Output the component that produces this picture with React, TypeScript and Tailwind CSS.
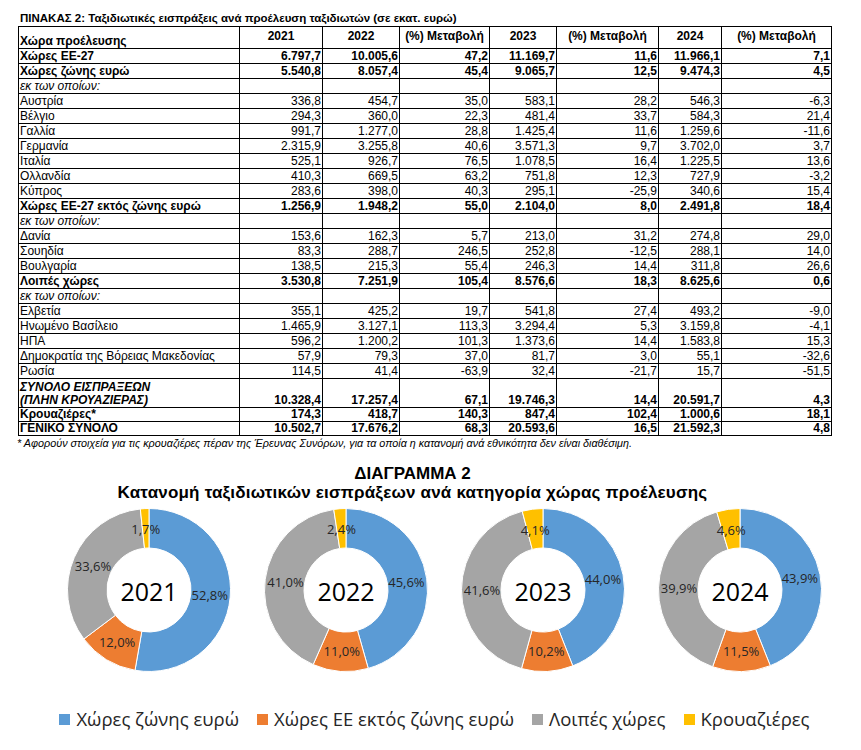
import React from 'react';

type Row = {
  label: string;
  v?: string[];
  kind?: 'bold' | 'sub' | 'total';
  h?: string;
};

const ROWS: Row[] = [
  { label: 'Χώρες ΕΕ-27', v: ['6.797,7', '10.005,6', '47,2', '11.169,7', '11,6', '11.966,1', '7,1'], kind: 'bold' },
  { label: 'Χώρες ζώνης ευρώ', v: ['5.540,8', '8.057,4', '45,4', '9.065,7', '12,5', '9.474,3', '4,5'], kind: 'bold' },
  { label: 'εκ των οποίων:', kind: 'sub' },
  { label: 'Αυστρία', v: ['336,8', '454,7', '35,0', '583,1', '28,2', '546,3', '-6,3'] },
  { label: 'Βέλγιο', v: ['294,3', '360,0', '22,3', '481,4', '33,7', '584,3', '21,4'] },
  { label: 'Γαλλία', v: ['991,7', '1.277,0', '28,8', '1.425,4', '11,6', '1.259,6', '-11,6'] },
  { label: 'Γερμανία', v: ['2.315,9', '3.255,8', '40,6', '3.571,3', '9,7', '3.702,0', '3,7'] },
  { label: 'Ιταλία', v: ['525,1', '926,7', '76,5', '1.078,5', '16,4', '1.225,5', '13,6'] },
  { label: 'Ολλανδία', v: ['410,3', '669,5', '63,2', '751,8', '12,3', '727,9', '-3,2'] },
  { label: 'Κύπρος', v: ['283,6', '398,0', '40,3', '295,1', '-25,9', '340,6', '15,4'] },
  { label: 'Χώρες ΕΕ-27 εκτός ζώνης ευρώ', v: ['1.256,9', '1.948,2', '55,0', '2.104,0', '8,0', '2.491,8', '18,4'], kind: 'bold' },
  { label: 'εκ των οποίων:', kind: 'sub' },
  { label: 'Δανία', v: ['153,6', '162,3', '5,7', '213,0', '31,2', '274,8', '29,0'] },
  { label: 'Σουηδία', v: ['83,3', '288,7', '246,5', '252,8', '-12,5', '288,1', '14,0'] },
  { label: 'Βουλγαρία', v: ['138,5', '215,3', '55,4', '246,3', '14,4', '311,8', '26,6'] },
  { label: 'Λοιπές χώρες', v: ['3.530,8', '7.251,9', '105,4', '8.576,6', '18,3', '8.625,6', '0,6'], kind: 'bold' },
  { label: 'εκ των οποίων:', kind: 'sub' },
  { label: 'Ελβετία', v: ['355,1', '425,2', '19,7', '541,8', '27,4', '493,2', '-9,0'] },
  { label: 'Ηνωμένο Βασίλειο', v: ['1.465,9', '3.127,1', '113,3', '3.294,4', '5,3', '3.159,8', '-4,1'] },
  { label: 'ΗΠΑ', v: ['596,2', '1.200,2', '101,3', '1.373,6', '14,4', '1.583,8', '15,3'] },
  { label: 'Δημοκρατία της Βόρειας Μακεδονίας', v: ['57,9', '79,3', '37,0', '81,7', '3,0', '55,1', '-32,6'] },
  { label: 'Ρωσία', v: ['114,5', '41,4', '-63,9', '32,4', '-21,7', '15,7', '-51,5'] },
  { label: 'ΣΥΝΟΛΟ ΕΙΣΠΡΑΞΕΩΝ\n(ΠΛΗΝ ΚΡΟΥΑΖΙΕΡΑΣ)', v: ['10.328,4', '17.257,4', '67,1', '19.746,3', '14,4', '20.591,7', '4,3'], kind: 'total' },
  { label: 'Κρουαζιέρες*', v: ['174,3', '418,7', '140,3', '847,4', '102,4', '1.000,6', '18,1'], kind: 'bold', h: 'h-[14px]' },
  { label: 'ΓΕΝΙΚΟ ΣΥΝΟΛΟ', v: ['10.502,7', '17.676,2', '68,3', '20.593,6', '16,5', '21.592,3', '4,8'], kind: 'bold', h: 'h-[14px]' },
];

const HEAD = ['2021', '2022', '(%) Μεταβολή', '2023', '(%) Μεταβολή', '2024', '(%) Μεταβολή'];

const COLORS = ['#5b9bd5', '#ed7d31', '#a5a5a5', '#ffc000'];

const DONUTS = [
  { year: '2021', vals: [52.8, 12.0, 33.6, 1.7] },
  { year: '2022', vals: [45.6, 11.0, 41.0, 2.4] },
  { year: '2023', vals: [44.0, 10.2, 41.6, 4.1] },
  { year: '2024', vals: [43.9, 11.5, 39.9, 4.6] },
];

const LEGEND = ['Χώρες ζώνης ευρώ', 'Χώρες ΕΕ εκτός ζώνης ευρώ', 'Λοιπές χώρες', 'Κρουαζιέρες'];

const SIZE = 172;
const C = SIZE / 2;
const R_OUT = 81.5;
const R_IN = 42;

const pt = (r: number, a: number) => {
  const t = a * Math.PI * 2;
  return [C + r * Math.sin(t), C - r * Math.cos(t)];
};

const segPath = (a0: number, a1: number) => {
  const large = a1 - a0 > 0.5 ? 1 : 0;
  const [x0, y0] = pt(R_OUT, a0);
  const [x1, y1] = pt(R_OUT, a1);
  const [x2, y2] = pt(R_IN, a1);
  const [x3, y3] = pt(R_IN, a0);
  return `M${x0} ${y0} A${R_OUT} ${R_OUT} 0 ${large} 1 ${x1} ${y1} L${x2} ${y2} A${R_IN} ${R_IN} 0 ${large} 0 ${x3} ${y3} Z`;
};

const Donut: React.FC<{ year: string; vals: number[] }> = ({ year, vals }) => {
  const total = vals.reduce((s, v) => s + v, 0);
  let acc = 0;
  const segs = vals.map((v, i) => {
    const a0 = acc / total;
    acc += v;
    const a1 = acc / total;
    const [lx, ly] = pt(61, (a0 + a1) / 2);
    return { a0, a1, lx, ly, color: COLORS[i], text: v.toFixed(1).replace('.', ',') + '%' };
  });

  return (
    <svg width={SIZE} height={SIZE} viewBox={`0 0 ${SIZE} ${SIZE}`} className="shrink-0">
      {segs.map((s, i) => (
        <path key={i} d={segPath(s.a0, s.a1)} fill={s.color} stroke="#ffffff" strokeWidth={1} />
      ))}
      {segs.map((s, i) => (
        <text
          key={`t${i}`}
          x={s.lx}
          y={s.ly}
          textAnchor="middle"
          dominantBaseline="central"
          fontSize={13}
          fill="#262626"
          fontFamily='"Open Sans", sans-serif'
        >
          {s.text}
        </text>
      ))}
      <text
        x={C}
        y={C + 1}
        textAnchor="middle"
        dominantBaseline="central"
        fontSize={25}
        fill="#000000"
        fontFamily='"Open Sans", sans-serif'
      >
        {year}
      </text>
    </svg>
  );
};

export default function App() {
  return (
    <div className="w-[861px] h-[750px] bg-white text-black font-['Liberation_Sans',Arial,sans-serif] pl-[18px] pt-[11px]">
      <div className="pl-[2px] text-[11.5px] font-bold leading-[15px] h-[15px] whitespace-nowrap">
        ΠΙΝΑΚΑΣ 2: Ταξιδιωτικές εισπράξεις ανά προέλευση ταξιδιωτών (σε εκατ. ευρώ)
      </div>

      <table className="table-fixed border-collapse w-[813px] text-[12px] leading-[13px]">
        <colgroup>
          <col className="w-[221px]" />
          <col className="w-[83px]" />
          <col className="w-[77px]" />
          <col className="w-[90px]" />
          <col className="w-[67px]" />
          <col className="w-[102px]" />
          <col className="w-[63px]" />
          <col className="w-[110px]" />
        </colgroup>
        <thead>
          <tr>
            <th className="h-[22px] border border-black p-0 pl-[1px] text-left align-bottom font-bold">Χώρα προέλευσης</th>
            {HEAD.map((h, i) => (
              <th key={i} className="border border-black p-0 pb-[3px] text-center align-middle font-bold whitespace-nowrap">
                {h}
              </th>
            ))}
          </tr>
        </thead>
        <tbody>
          {ROWS.map((r, i) => {
            const bold = r.kind === 'bold' || r.kind === 'total';
            const h = r.kind === 'total' ? 'h-[29px]' : r.h ?? 'h-[15px]';
            return (
              <tr key={i}>
                <td
                  className={`${h} border border-black p-0 pl-[1px] align-bottom whitespace-pre-line ${
                    bold ? 'font-bold' : ''
                  } ${r.kind === 'sub' || r.kind === 'total' ? 'italic' : ''}`}
                >
                  {r.label}
                </td>
                {(r.v ?? ['', '', '', '', '', '', '']).map((v, j) => (
                  <td
                    key={j}
                    className={`border border-black p-0 pr-[1px] text-right align-bottom whitespace-nowrap ${
                      bold ? 'font-bold' : ''
                    }`}
                  >
                    {v}
                  </td>
                ))}
              </tr>
            );
          })}
        </tbody>
      </table>

      <div className="text-[10.8px] italic leading-[12px] mt-[1px] -ml-[1px] whitespace-nowrap">
        * Αφορούν στοιχεία για τις κρουαζιέρες πέραν της Έρευνας Συνόρων, για τα οποία η κατανομή ανά εθνικότητα δεν είναι διαθέσιμη.
      </div>

      <div className="-ml-[18px] w-[861px] pr-[36px] flex flex-col items-center mt-[15px]">
        <div className="text-[17px] font-bold leading-[19px]">ΔΙΑΓΡΑΜΜΑ 2</div>
        <div className="text-[17px] font-bold leading-[19px] tracking-[0.2px] whitespace-nowrap">
          Κατανομή ταξιδιωτικών εισπράξεων ανά κατηγορία χώρας προέλευσης
        </div>
      </div>

      <div className="-ml-[18px] flex gap-[25px] pl-[63px] mt-[2px]">
        {DONUTS.map((d) => (
          <Donut key={d.year} year={d.year} vals={d.vals} />
        ))}
      </div>

      <div className="-ml-[18px] w-[861px] pl-[8px] flex justify-center items-center gap-[18px] mt-[31px] font-['Open_Sans',sans-serif] text-[18.5px] text-[#262626] leading-[24px] whitespace-nowrap">
        {LEGEND.map((l, i) => (
          <div key={l} className="flex items-center gap-[6px]">
            <span className="w-[11px] h-[11px]" style={{ backgroundColor: COLORS[i] }} />
            <span>{l}</span>
          </div>
        ))}
      </div>
    </div>
  );
}
